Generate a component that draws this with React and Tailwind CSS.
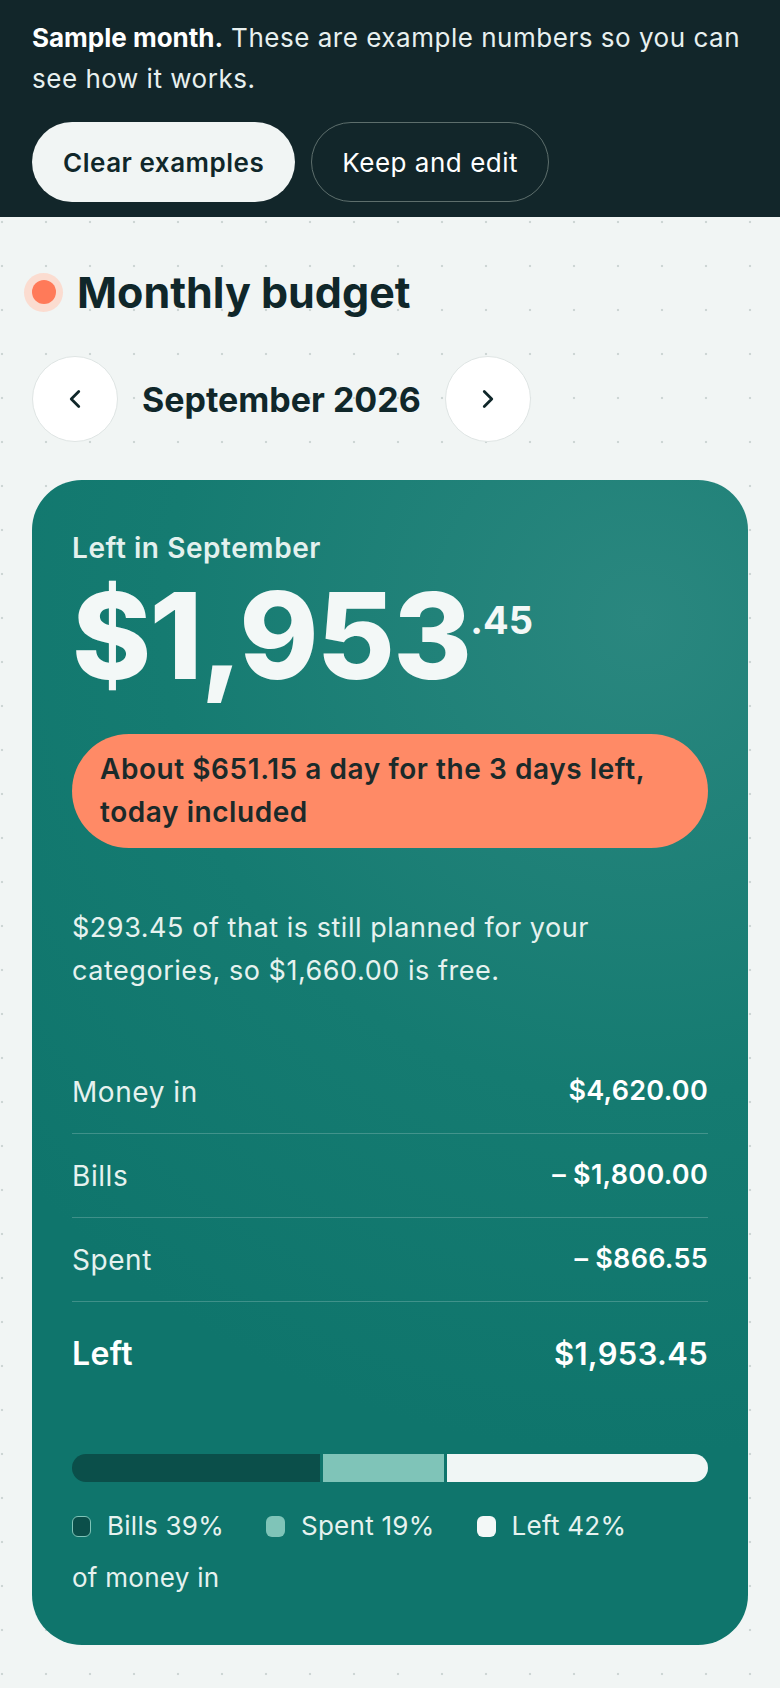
import React from "react";
import { ChevronLeft, ChevronRight } from "lucide-react";

function Row({ label, value, last }) {
  return (
    <div className={"flex items-center justify-between " + (last ? "h-[104px]" : "h-[84px] border-b border-white/20")}>
      <span className={last ? "text-[32px] font-semibold tracking-[0.01em] text-white" : "text-[28px] tracking-[0.02em] text-[#e6f2ef]"}>{label}</span>
      <span className={last ? "text-[31px] font-semibold tracking-[0.01em] text-white" : "text-[27px] font-semibold tracking-[0.01em] text-white"}>{value}</span>
    </div>
  );
}

export default function App() {
  return (
    <div className="min-h-[1688px] bg-[#f1f5f4] font-['Inter',sans-serif] text-[#10272a]">
      <div className="bg-[#12262a] px-8 pt-[17px] pb-[15px]">
        <p className="text-[26px] leading-[41px] tracking-[0.02em] text-[#e8f0ef]">
          <strong className="font-bold tracking-normal text-white">Sample month.</strong> These are example numbers so you can see how it works.
        </p>
        <div className="mt-[23px] flex gap-4">
          <button className="h-[80px] rounded-full bg-[#f1f5f4] px-[31px] text-[26px] font-semibold tracking-[0.02em] text-[#10272a]">Clear examples</button>
          <button className="h-[80px] rounded-full border-[1.5px] border-[#5d6e6c] px-[30px] text-[26px] tracking-[0.02em] text-white">Keep and edit</button>
        </div>
      </div>

      <div className="bg-[radial-gradient(circle,#cdd6d4_1.2px,transparent_1.6px)] bg-[length:44px_44px] bg-[position:-20px_-17px] px-8 pt-[51px] pb-[44px]">
        <div className="flex items-center gap-[14px]">
          <span className="-ml-2 flex h-[39px] w-[39px] items-center justify-center rounded-full bg-[#fbdcd0]">
            <span className="h-[24px] w-[24px] rounded-full bg-[#ff7a59]"></span>
          </span>
          <h1 className="text-[43px] leading-[48px] font-bold text-[#10272a]">Monthly budget</h1>
        </div>

        <div className="mt-[40px] flex items-center gap-6">
          <button className="flex h-[86px] w-[86px] items-center justify-center rounded-full border-[1.5px] border-[#dfe5e4] bg-white">
            <ChevronLeft size={30} strokeWidth={2.25} className="text-[#10272a]" />
          </button>
          <span className="text-[34px] font-bold text-[#10272a]">September 2026</span>
          <button className="flex h-[86px] w-[86px] items-center justify-center rounded-full border-[1.5px] border-[#dfe5e4] bg-white">
            <ChevronRight size={30} strokeWidth={2.25} className="text-[#10272a]" />
          </button>
        </div>

        <div className="mt-[38px] rounded-[50px] bg-[radial-gradient(circle_at_85%_12%,#2a877f_0%,#157b71_40%,#0f756c_70%)] px-10 pt-[50px] pb-[47px] text-white">
          <div className="text-[28px] leading-[36px] font-semibold tracking-[0.02em] text-[#e3f1ee]">Left in September</div>
          <div className="mt-[10px] flex items-start leading-none">
            <span className="text-[120px] leading-[120px] font-extrabold tracking-[-0.015em] text-[#f3f8f7]">$1,953</span>
            <span className="mt-[25px] text-[38px] font-bold text-[#f3f8f7]">.45</span>
          </div>

          <div className="mt-[38px] rounded-full bg-[#ff8a66] px-7 py-[14px] text-[28px] leading-[43px] font-semibold tracking-[0.02em] text-[#1b2a2a]">
            About $651.15 a day for the 3 days left, today included
          </div>

          <p className="mt-[58px] text-[27px] leading-[43px] tracking-[0.02em] text-[#e6f2ef]">
            $293.45 of that is still planned for your categories, so $1,660.00 is free.
          </p>

          <div className="mt-[58px]">
            <Row label="Money in" value="$4,620.00" />
            <Row label="Bills" value="– $1,800.00" />
            <Row label="Spent" value="– $866.55" />
            <Row label="Left" value="$1,953.45" last />
          </div>

          <div className="mt-[48px] flex h-[28px] gap-[3px] overflow-hidden rounded-full">
            <div className="h-full w-[39%] bg-[#0b4f4a]"></div>
            <div className="h-full w-[19%] bg-[#7fc4b8]"></div>
            <div className="h-full flex-1 bg-[#f0f6f5]"></div>
          </div>

          <div className="mt-[24px] flex flex-wrap items-center gap-x-[42px] gap-y-[12px] text-[26px] leading-[40px] tracking-[0.01em] text-[#e6f2ef]">
            <span className="flex items-center gap-[16px]">
              <span className="h-[21px] w-[19px] rounded-[6px] border-[1.5px] border-[#7fc4b8] bg-[#0b4f4a]"></span>
              Bills 39%
            </span>
            <span className="flex items-center gap-[16px]">
              <span className="h-[21px] w-[19px] rounded-[6px] bg-[#7fc4b8]"></span>
              Spent 19%
            </span>
            <span className="flex items-center gap-[16px]">
              <span className="h-[21px] w-[19px] rounded-[6px] bg-[#f3f8f7]"></span>
              Left 42%
            </span>
            <span>of money in</span>
          </div>
        </div>
      </div>
    </div>
  );
}
